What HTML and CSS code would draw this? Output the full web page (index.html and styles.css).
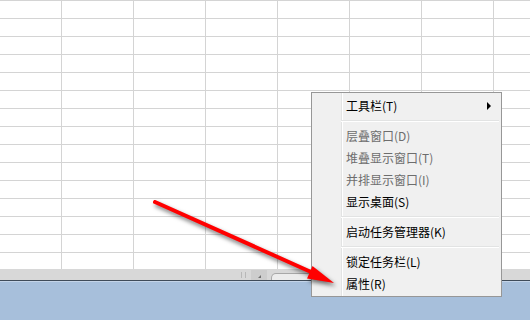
FILE: index.html
```html
<!DOCTYPE html>
<html lang="zh-CN">
<head>
<meta charset="utf-8">
<link rel="stylesheet" href="styles.css">
</head>
<body>
<div class="screen">
  <div class="sheet"></div>
  <div class="sheetbar">
    <span class="grip"></span>
    <span class="navbox"><span class="navtri"></span></span>
    <span class="tab"></span>
  </div>
  <div class="taskbar"></div>

  <div class="menu">
    <div class="item"><span>工具栏(T)</span><span class="sub"></span></div>
    <div class="sep"></div>
    <div class="item disabled">层叠窗口(D)</div>
    <div class="item disabled">堆叠显示窗口(T)</div>
    <div class="item disabled">并排显示窗口(I)</div>
    <div class="item">显示桌面(S)</div>
    <div class="sep"></div>
    <div class="item">启动任务管理器(K)</div>
    <div class="sep"></div>
    <div class="item">锁定任务栏(L)</div>
    <div class="item">属性(R)</div>
  </div>

  <svg class="arrow" width="530" height="320" viewBox="0 0 530 320">
    <g class="arrow-g">
      <line x1="155" y1="202" x2="311" y2="272" stroke="#ff0000" stroke-width="4" stroke-linecap="round"/>
      <polygon points="334,283 312.5,266 307,278.5" fill="#ff0000"/>
    </g>
  </svg>
</div>
</body>
</html>
```

FILE: styles.css
```css
html, body {
  margin: 0;
  padding: 0;
  overflow: hidden;
}
body {
  font-family: "Noto Sans CJK SC", "Noto Sans", sans-serif;
}
.screen {
  position: relative;
  width: 530px;
  height: 320px;
  display: flex;
  flex-direction: column;
  background: #fff;
}
.sheet {
  height: 269px;
  background-color: #fff;
  background-image:
    linear-gradient(to right, #d4d4d4 1px, transparent 1px),
    linear-gradient(to bottom, #d4d4d4 1px, transparent 1px);
  background-size: 72px 18px, 72px 18px;
  background-position: 61px 0, 0 0;
}
.sheetbar {
  height: 11px;
  background: #d8d8d8;
  border-bottom: 1px solid #3f4b59;
  display: flex;
  align-items: flex-end;
}
.grip {
  width: 3px;
  height: 6px;
  margin-left: 241px;
  margin-bottom: 2px;
  border-left: 1px solid #b8b8b8;
  border-right: 1px solid #b8b8b8;
}
.navbox {
  width: 16px;
  height: 10px;
  margin-left: 5px;
  background: #cdcdcd;
  display: flex;
  align-items: flex-end;
  justify-content: center;
}
.navtri {
  width: 0;
  height: 0;
  margin-bottom: 2px;
  border-left: 3px solid transparent;
  border-bottom: 3px solid #707070;
}
.tab {
  width: 60px;
  height: 6px;
  margin-left: 4px;
  background: #ececec;
  border: 1px solid #a8a8a8;
  border-bottom: none;
  border-radius: 5px 0 0 0;
}
.taskbar {
  flex: 1;
  background: #a7bfdb;
  border-top: 1px solid #c4d4e8;
}
.menu {
  position: absolute;
  left: 311px;
  top: 92px;
  width: 185px;
  padding: 2px 2px 1px 2px;
  background-color: #f0f0f0;
  background-image: linear-gradient(to right, transparent 27px, #e2e3e3 27px, #e2e3e3 28px, #ffffff 28px, #ffffff 29px, transparent 29px);
  background-origin: content-box;
  background-clip: padding-box;
  border: 1px solid #979797;
  font-size: 12px;
  color: #000;
}
.item {
  height: 22px;
  line-height: 22px;
  padding-left: 32px;
  display: flex;
  align-items: center;
  white-space: nowrap;
}
.item.disabled {
  color: #6d6d6d;
}
.sub {
  margin-left: auto;
  margin-right: 8px;
  width: 0;
  height: 0;
  border-left: 4px solid #000;
  border-top: 4px solid transparent;
  border-bottom: 4px solid transparent;
}
.sep {
  height: 8px;
  margin-left: 27px;
  box-sizing: border-box;
  padding-top: 3px;
}
.sep::before {
  content: "";
  display: block;
  height: 1px;
  background: #e2e3e3;
  border-bottom: 1px solid #ffffff;
}
.arrow {
  position: absolute;
  left: 0;
  top: 0;
  pointer-events: none;
}
.arrow-g {
  filter: drop-shadow(2px 3px 2px rgba(0, 0, 0, 0.55));
}
```
